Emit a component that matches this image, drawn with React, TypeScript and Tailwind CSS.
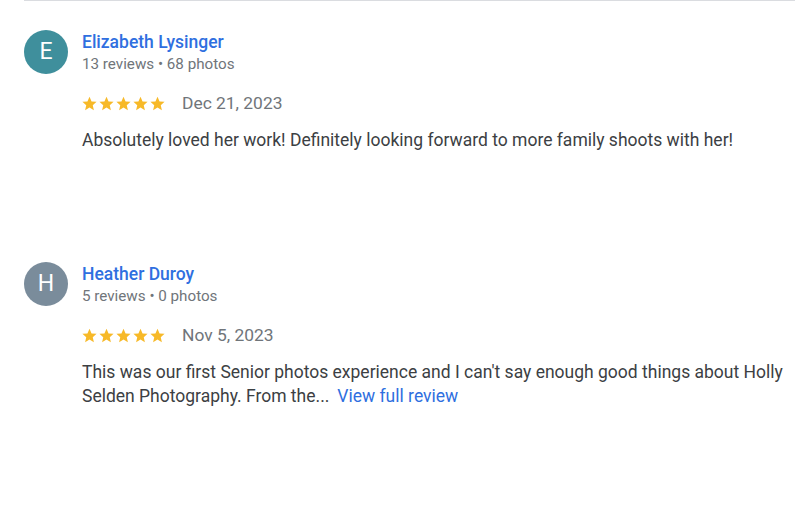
import React from "react";

type Review = {
  initial: string;
  color: string;
  name: string;
  meta: string;
  date: string;
  text: string;
  more?: boolean;
};

const reviews: Review[] = [
  {
    initial: "E",
    color: "bg-[#3f8f9c]",
    name: "Elizabeth Lysinger",
    meta: "13 reviews • 68 photos",
    date: "Dec 21, 2023",
    text: "Absolutely loved her work! Definitely looking forward to more family shoots with her!",
  },
  {
    initial: "H",
    color: "bg-[#7a8c9b]",
    name: "Heather Duroy",
    meta: "5 reviews • 0 photos",
    date: "Nov 5, 2023",
    text: "This was our first Senior photos experience and I can't say enough good things about Holly Selden Photography. From the...",
    more: true,
  },
];

const Star = () => (
  <svg viewBox="0 0 24 24" className="w-[17px] h-[17px]" fill="#f7b928">
    <path d="M12 2.5l2.9 6.6 7.1.6-5.4 4.7 1.6 7-6.2-3.7-6.2 3.7 1.6-7L2 9.7l7.1-.6z" />
  </svg>
);

const ReviewItem: React.FC<{ r: Review }> = ({ r }) => (
  <div className="flex items-start gap-[14px]">
    <div
      className={`${r.color} w-11 h-11 rounded-full shrink-0 flex items-center justify-center text-white text-[23px]`}
    >
      {r.initial}
    </div>
    <div className="flex-1 pt-0.5">
      <div className="text-[17.5px] leading-5 font-medium text-[#2f6fe0]">{r.name}</div>
      <div className="mt-0.5 text-[15.2px] leading-5 text-[#70757a]">{r.meta}</div>
      <div className="mt-[17px] flex items-center h-6">
        <div className="flex -ml-px">
          {[0, 1, 2, 3, 4].map((i) => (
            <Star key={i} />
          ))}
        </div>
        <span className="ml-4 text-[17.4px] text-[#70757a]">{r.date}</span>
      </div>
      <p className="mt-[13px] text-[17.5px] leading-6 text-[#3c4043] pr-2">
        {r.text}
        {r.more && <a className="ml-2 text-[#2f6fe0]">View full review</a>}
      </p>
    </div>
  </div>
);

export default function App() {
  return (
    <div
      className="w-[800px] h-[517px] bg-white overflow-hidden"
      style={{ fontFamily: "Roboto, 'Liberation Sans', sans-serif" }}
    >
      <div className="ml-6 mr-[5px] border-t border-[#dadce0]" />
      <div className="pl-6 pt-[29px] flex flex-col gap-[110px]">
        {reviews.map((r) => (
          <ReviewItem key={r.name} r={r} />
        ))}
      </div>
    </div>
  );
}
